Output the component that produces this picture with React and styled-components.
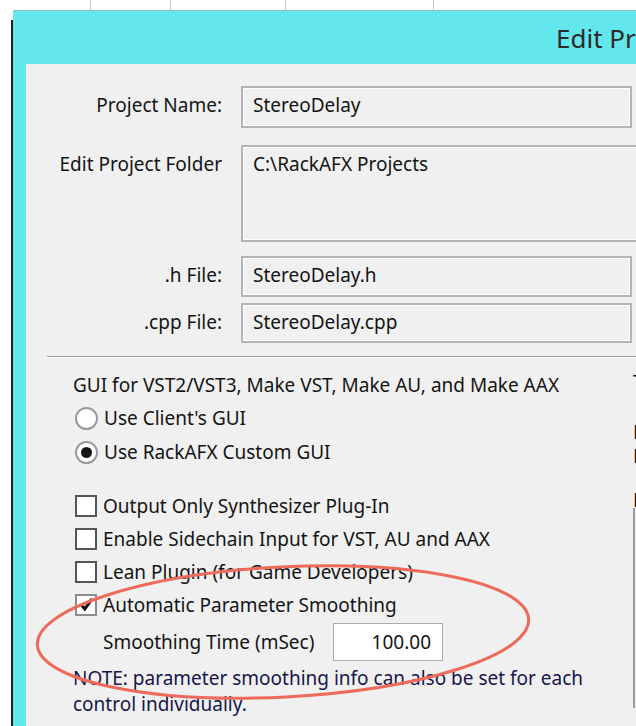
import React from 'react';
import styled, { createGlobalStyle } from 'styled-components';

const GlobalStyle = createGlobalStyle`
  html, body {
    margin: 0;
    padding: 0;
    background: #ffffff;
  }
  body {
    font-family: "Noto Sans", "Open Sans", sans-serif;
    overflow: hidden;
  }
`;

const Screen = styled.div`
  width: 636px;
  height: 726px;
  overflow: hidden;
  display: flex;
  flex-direction: column;
  background: #ffffff;
`;

const TopStrip = styled.div`
  height: 10px;
  display: flex;
  flex-shrink: 0;
`;

const Tick = styled.span`
  width: 1px;
  height: 10px;
  margin-left: ${(p) => p.$gap}px;
  background: #c9c9c9;
`;

const Desk = styled.div`
  flex: 1;
  display: flex;
  min-height: 0;
`;

const BackEdge = styled.div`
  width: 2px;
  margin-left: 11px;
  margin-top: 10px;
  background: #1f1f1f;
`;

const Window = styled.div`
  flex: 1;
  min-width: 0;
  display: flex;
  flex-direction: column;
  background: #63e6ec;
  border-top: 1px solid #8fbcbf;
  padding-left: 13px;
`;

const TitleBar = styled.div`
  height: 53px;
  flex-shrink: 0;
  display: flex;
  align-items: center;
  padding-left: 530px;
  font-size: 26px;
  color: #2a2a2a;
  white-space: nowrap;
  overflow: hidden;
`;

const Panel = styled.div`
  flex: 1;
  position: relative;
  overflow: hidden;
  background: #f0f0f0;
  color: #141414;
  font-size: 19px;
  padding-top: 22px;
`;

const FieldRow = styled.div`
  display: grid;
  grid-template-columns: 196px ${(p) => (p.$wide ? 430 : 391)}px;
  column-gap: 19px;
  margin-top: ${(p) => p.$top || 0}px;
`;

const FieldLabel = styled.div`
  text-align: right;
  padding-top: 5px;
  line-height: 28px;
  white-space: nowrap;
`;

const FieldBox = styled.div`
  box-sizing: border-box;
  height: ${(p) => p.$height}px;
  padding: 3px 10px;
  line-height: 28px;
  border: 2px solid #b3b3b8;
  box-shadow: inset 1px 1px 0 #ffffff, inset -1px -1px 0 #ffffff;
  background: #f0f0f0;
  white-space: nowrap;
`;

const Separator = styled.div`
  margin: 13px 0 0 21px;
  height: 0;
  border-top: 1px solid #a0a0a0;
  border-bottom: 1px solid #ffffff;
`;

const Lower = styled.div`
  display: flex;
`;

const Options = styled.div`
  width: 553px;
  padding-left: 47px;
  flex-shrink: 0;
`;

const Heading = styled.div`
  margin-top: 11px;
  height: 32px;
  line-height: 32px;
  white-space: nowrap;
`;

const OptionRow = styled.label`
  display: flex;
  align-items: center;
  gap: 6px;
  height: ${(p) => p.$h}px;
  margin-top: ${(p) => p.$top || 0}px;
  padding-left: 2px;
  white-space: nowrap;
`;

const Radio = styled.span`
  box-sizing: border-box;
  width: 23px;
  height: 23px;
  border-radius: 50%;
  border: 2px solid #9a9a9a;
  background: #ffffff;
  display: flex;
  align-items: center;
  justify-content: center;
  flex-shrink: 0;

  &::after {
    content: '';
    width: 11px;
    height: 11px;
    border-radius: 50%;
    background: ${(p) => (p.$on ? '#151515' : 'transparent')};
  }
`;

const Check = styled.span`
  box-sizing: border-box;
  width: 22px;
  height: 22px;
  border: 2px solid ${(p) => (p.$on ? '#8c8c8c' : '#555555')};
  background: #ffffff;
  display: flex;
  align-items: center;
  justify-content: center;
  flex-shrink: 0;
`;

const SmoothRow = styled.div`
  display: flex;
  align-items: center;
  margin-top: 2px;
  padding-left: 30px;
  height: 38px;
`;

const SmoothLabel = styled.span`
  width: 230px;
  white-space: nowrap;
`;

const NumberBox = styled.div`
  box-sizing: border-box;
  width: 110px;
  height: 38px;
  border: 1px solid #ababab;
  background: #ffffff;
  padding-right: 11px;
  display: flex;
  align-items: center;
  justify-content: flex-end;
`;

const Note = styled.p`
  margin: 4px 0 0;
  line-height: 26px;
  color: #16164a;
`;

const SideColumn = styled.div`
  margin-left: 7px;
  padding-top: 12px;
  display: flex;
  flex-direction: column;
  white-space: nowrap;
`;

const SideGlyph = styled.span`
  height: ${(p) => p.$h}px;
  line-height: 24px;
`;

const SideList = styled.div`
  height: 200px;
  border-left: 2px solid #9c9ca4;
`;

const Highlight = styled.svg`
  position: absolute;
  left: 0;
  top: 0;
  pointer-events: none;
`;

function CheckMark() {
  return (
    <svg width="15" height="15" viewBox="0 0 15 15">
      <path d="M2 7.5 L5.8 12 L13 1.8" fill="none" stroke="#111" strokeWidth="3" />
    </svg>
  );
}

export default function App() {
  return (
    <Screen>
      <GlobalStyle />
      <TopStrip>
        <Tick $gap={90} />
        <Tick $gap={79} />
        <Tick $gap={114} />
        <Tick $gap={147} />
      </TopStrip>
      <Desk>
        <BackEdge />
        <Window>
          <TitleBar>Edit Project</TitleBar>
          <Panel>
            <FieldRow>
              <FieldLabel>Project Name:</FieldLabel>
              <FieldBox $height={42}>StereoDelay</FieldBox>
            </FieldRow>
            <FieldRow $top={17} $wide>
              <FieldLabel>Edit Project Folder</FieldLabel>
              <FieldBox $height={97}>C:\RackAFX Projects</FieldBox>
            </FieldRow>
            <FieldRow $top={14}>
              <FieldLabel>.h File:</FieldLabel>
              <FieldBox $height={41}>StereoDelay.h</FieldBox>
            </FieldRow>
            <FieldRow $top={6}>
              <FieldLabel>.cpp File:</FieldLabel>
              <FieldBox $height={40}>StereoDelay.cpp</FieldBox>
            </FieldRow>

            <Separator />

            <Lower>
              <Options>
                <Heading>GUI for VST2/VST3, Make VST, Make AU, and Make AAX</Heading>
                <OptionRow $h={34}>
                  <Radio />
                  Use Client's GUI
                </OptionRow>
                <OptionRow $h={34}>
                  <Radio $on />
                  Use RackAFX Custom GUI
                </OptionRow>

                <OptionRow $h={33} $top={20}>
                  <Check />
                  Output Only Synthesizer Plug-In
                </OptionRow>
                <OptionRow $h={33}>
                  <Check />
                  Enable Sidechain Input for VST, AU and AAX
                </OptionRow>
                <OptionRow $h={33}>
                  <Check />
                  Lean Plugin (for Game Developers)
                </OptionRow>
                <OptionRow $h={33}>
                  <Check $on>
                    <CheckMark />
                  </Check>
                  Automatic Parameter Smoothing
                </OptionRow>

                <SmoothRow>
                  <SmoothLabel>Smoothing Time (mSec)</SmoothLabel>
                  <NumberBox>100.00</NumberBox>
                </SmoothRow>

                <Note>
                  NOTE: parameter smoothing info can also be set for each
                  <br />
                  control individually.
                </Note>
              </Options>

              <SideColumn>
                <SideGlyph $h={50}>T</SideGlyph>
                <SideGlyph $h={24}>P</SideGlyph>
                <SideGlyph $h={44}>F</SideGlyph>
                <SideGlyph $h={20}>E</SideGlyph>
                <SideList />
              </SideColumn>
            </Lower>

            <Highlight width="610" height="662">
              <ellipse
                cx="257"
                cy="568"
                rx="246"
                ry="65"
                transform="rotate(-3 257 568)"
                fill="none"
                stroke="#ee6b5b"
                strokeWidth="3"
              />
            </Highlight>
          </Panel>
        </Window>
      </Desk>
    </Screen>
  );
}
